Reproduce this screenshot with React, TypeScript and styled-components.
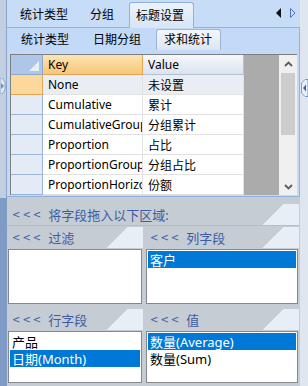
import React from 'react'
import styled, { createGlobalStyle } from 'styled-components'

const GlobalStyle = createGlobalStyle`
  html, body { margin: 0; padding: 0; }
  body {
    font-family: "Noto Sans", "Noto Sans CJK SC", sans-serif;
    font-size: 12px;
    color: #000;
  }
  * { box-sizing: border-box; }
`

const Window = styled.div`
  display: flex;
  width: 308px;
  height: 386px;
  overflow: hidden;
  background: #c6ccd4;
`
const LeftStrip = styled.div`
  width: 7px;
  display: flex;
  flex-direction: column;
`
const StripTop = styled.div`
  height: 198px;
  background: #c1cfe0;
  border-right: 1px solid #8ba4c7;
  padding-top: 78px;
`
const StripBottom = styled.div`
  flex: 1;
  background: #7f9bc5;
`
const RightStrip = styled.div`
  width: 8px;
  background: #dfe6ef;
  padding-top: 79px;
`
const Main = styled.div`
  width: 293px;
  display: flex;
  flex-direction: column;
`
const TopTabs = styled.div`
  height: 27px;
  display: flex;
  align-items: flex-end;
  padding-left: 2px;
  background: #c7dcf6;
`
const Tab = styled.div<{ $active?: boolean }>`
  height: 25px;
  display: flex;
  align-items: center;
  padding: 0 11px 1px;
  ${(p) =>
    p.$active &&
    `
    height: 26px;
    margin-left: 4px;
    margin-bottom: -1px;
    padding: 0 9px 1px 6px;
    border: 1px solid #8fb2de;
    border-bottom: none;
    border-radius: 3px 3px 0 0;
    background: linear-gradient(#edf3fb, #d6e5f8);
    position: relative;
    z-index: 1;
  `}
`
const TabArrows = styled.div`
  margin-left: auto;
  align-self: center;
  display: flex;
  gap: 8px;
  padding: 0 4px 1px 0;
`
const TabPanel = styled.div`
  background: #c2d9f8;
  border-top: 1px solid #8fb2de;
  border-right: 1px solid #8fb2de;
  border-bottom: 1px solid #8fb2de;
  padding-bottom: 1px;
`
const SubTabs = styled.div`
  height: 22px;
  display: flex;
  align-items: flex-end;
  padding-left: 2px;
`
const SubTab = styled.div<{ $active?: boolean }>`
  height: 21px;
  display: flex;
  align-items: center;
  padding: 0 12px 2px;
  ${(p) =>
    p.$active &&
    `
    margin-left: 3px;
    padding: 0 8px 2px 7px;
    border: 1px solid #9db4d2;
    border-bottom: none;
    border-radius: 3px 3px 0 0;
    background: linear-gradient(#f4f7fb, #dce5f0);
  `}
`
const GridFrame = styled.div`
  margin: 4px 2px 0 3px;
  height: 141px;
  display: flex;
  border-top: 1px solid #7f7f7f;
  border-left: 1px solid #7f7f7f;
`
const Table = styled.div`
  display: grid;
  grid-template-columns: 32px 100px 101px;
  grid-auto-rows: 20px;
`
const CornerCell = styled.div`
  background: #aec6e7;
  border-right: 1px solid #8ea8cc;
  border-bottom: 1px solid #8ea8cc;
  display: flex;
  align-items: flex-end;
  justify-content: flex-end;
  padding: 0 3px 3px 0;
`
const HeadCell = styled.div<{ $active?: boolean }>`
  display: flex;
  align-items: center;
  padding-left: 5px;
  background: ${(p) => (p.$active ? 'linear-gradient(#fde4b3, #f7c679)' : 'linear-gradient(#f5f8fc, #dbe3ee)')};
  border-right: 1px solid ${(p) => (p.$active ? '#e2a653' : '#b4c1d2')};
  border-bottom: 1px solid ${(p) => (p.$active ? '#e2a653' : '#b4c1d2')};
`
const RowHead = styled.div<{ $active?: boolean }>`
  background: ${(p) => (p.$active ? '#fdd89c' : '#e4ebf5')};
  border-right: 1px solid ${(p) => (p.$active ? '#e5a553' : '#9db5d5')};
  border-bottom: 1px solid ${(p) => (p.$active ? '#e5a553' : '#9db5d5')};
`
const Cell = styled.div<{ $shade?: boolean }>`
  display: flex;
  align-items: center;
  padding-left: 5px;
  white-space: nowrap;
  overflow: hidden;
  background: ${(p) => (p.$shade ? '#e9edf4' : '#fff')};
  border-right: 1px solid #e2e2e2;
  border-bottom: 1px solid #e2e2e2;
`
const GrayFill = styled.div`
  flex: 1;
  background: #ababab;
`
const ScrollBar = styled.div`
  width: 18px;
  background: #f0f0f0;
  display: flex;
  flex-direction: column;
`
const ScrollBtn = styled.div`
  height: 17px;
  display: flex;
  align-items: center;
  justify-content: center;
`
const ScrollTrack = styled.div`
  flex: 1;
  padding: 0 2px;
`
const Thumb = styled.div`
  height: 62px;
  margin-top: 1px;
  background: #cdcdcd;
`
const DropArea = styled.div`
  flex: 1;
  padding: 7px 1px 0 0;
  display: flex;
  flex-direction: column;
  background: #c6ccd4;
`
const Band = styled.div`
  height: 21px;
  display: flex;
  align-items: center;
  gap: 5px;
  padding-left: 5px;
  font-size: 13px;
  color: #3b5da3;
  white-space: nowrap;
  background: linear-gradient(315deg, #e8eef6 26px, #c6ccd4 26px);
`
const Chevrons = styled.span`
  font-family: "DejaVu Sans", sans-serif;
  font-size: 10px;
  letter-spacing: 2px;
`
const Zones = styled.div`
  flex: 1;
  display: grid;
  grid-template-columns: 136px 1fr;
  grid-template-rows: 80px 1fr;
  column-gap: 2px;
  row-gap: 2px;
  padding-top: 1px;
  border-top: 1px solid #b8bec6;
`
const Zone = styled.div`
  display: flex;
  flex-direction: column;
`
const ZoneList = styled.div<{ $fill?: boolean }>`
  flex: 1;
  margin: 1px 1px 3px;
  background: #fff;
  border: 1px solid #84888f;
  padding: 1px;
`
const Item = styled.div<{ $selected?: boolean }>`
  height: 17px;
  display: flex;
  align-items: center;
  padding-left: 2px;
  font-size: 13px;
  white-space: nowrap;
  background: ${(p) => (p.$selected ? '#0078d7' : 'transparent')};
  color: ${(p) => (p.$selected ? '#fff' : '#000')};
`

const rows = [
  { key: 'None', value: '未设置' },
  { key: 'Cumulative', value: '累计' },
  { key: 'CumulativeGroup', value: '分组累计' },
  { key: 'Proportion', value: '占比' },
  { key: 'ProportionGroup', value: '分组占比' },
  { key: 'ProportionHorizontal', value: '份额' },
]

const zones = [
  { title: '过滤', items: [] as string[], selected: -1 },
  { title: '列字段', items: ['客户'], selected: 0 },
  { title: '行字段', items: ['产品', '日期(Month)'], selected: 1 },
  { title: '值', items: ['数量(Average)', '数量(Sum)'], selected: 0 },
]

export default function App() {
  return (
    <>
      <GlobalStyle />
      <Window>
        <LeftStrip>
          <StripTop>
            <svg width="6" height="16" viewBox="0 0 6 16">
              <polygon points="0,0 2,0 5,4 5,12 2,16 0,16" fill="#dfe6ef" stroke="#8ba4c7" />
              <polygon points="1,5 4,8 1,11" fill="#6f8fbd" />
            </svg>
          </StripTop>
          <StripBottom />
        </LeftStrip>
        <Main>
          <TopTabs>
            <Tab>统计类型</Tab>
            <Tab>分组</Tab>
            <Tab $active>标题设置</Tab>
            <TabArrows>
              <svg width="6" height="10" viewBox="0 0 6 10">
                <polygon points="5,0 0,5 5,10" fill="#111" />
              </svg>
              <svg width="6" height="10" viewBox="0 0 6 10">
                <polygon points="0.5,0.5 5,5 0.5,9.5" fill="none" stroke="#4f74b8" />
              </svg>
            </TabArrows>
          </TopTabs>
          <TabPanel>
            <SubTabs>
              <SubTab>统计类型</SubTab>
              <SubTab>日期分组</SubTab>
              <SubTab $active>求和统计</SubTab>
            </SubTabs>
            <GridFrame>
              <Table>
                <CornerCell>
                  <svg width="10" height="10" viewBox="0 0 10 10">
                    <polygon points="10,0 10,10 0,10" fill="#e9eff8" />
                  </svg>
                </CornerCell>
                <HeadCell $active>Key</HeadCell>
                <HeadCell>Value</HeadCell>
                {rows.map((r, i) => (
                  <React.Fragment key={r.key}>
                    <RowHead $active={i === 0} />
                    <Cell $shade={i === 0}>{r.key}</Cell>
                    <Cell $shade={i === 0}>{r.value}</Cell>
                  </React.Fragment>
                ))}
              </Table>
              <GrayFill />
              <ScrollBar>
                <ScrollBtn>
                  <svg width="9" height="6" viewBox="0 0 9 6">
                    <polyline points="1,5 4.5,1.5 8,5" fill="none" stroke="#5e5866" strokeWidth="1.8" />
                  </svg>
                </ScrollBtn>
                <ScrollTrack>
                  <Thumb />
                </ScrollTrack>
                <ScrollBtn>
                  <svg width="9" height="6" viewBox="0 0 9 6">
                    <polyline points="1,1 4.5,4.5 8,1" fill="none" stroke="#5e5866" strokeWidth="1.8" />
                  </svg>
                </ScrollBtn>
              </ScrollBar>
            </GridFrame>
          </TabPanel>
          <DropArea>
            <Band>
              <Chevrons>&lt;&lt;&lt;</Chevrons>
              <span>将字段拖入以下区域:</span>
            </Band>
            <Zones>
              {zones.map((z) => (
                <Zone key={z.title}>
                  <Band>
                    <Chevrons>&lt;&lt;&lt;</Chevrons>
                    <span>{z.title}</span>
                  </Band>
                  <ZoneList>
                    {z.items.map((it, i) => (
                      <Item key={it} $selected={i === z.selected}>
                        {it}
                      </Item>
                    ))}
                  </ZoneList>
                </Zone>
              ))}
            </Zones>
          </DropArea>
        </Main>
        <RightStrip>
          <svg width="8" height="18" viewBox="0 0 8 18">
            <polygon points="8,0.5 5,0.5 1.5,4 1.5,14 5,17.5 8,17.5" fill="#e8eef6" stroke="#7f9bc4" />
            <polygon points="6,5.5 3,9 6,12.5" fill="#3f63a3" />
          </svg>
        </RightStrip>
      </Window>
    </>
  )
}
